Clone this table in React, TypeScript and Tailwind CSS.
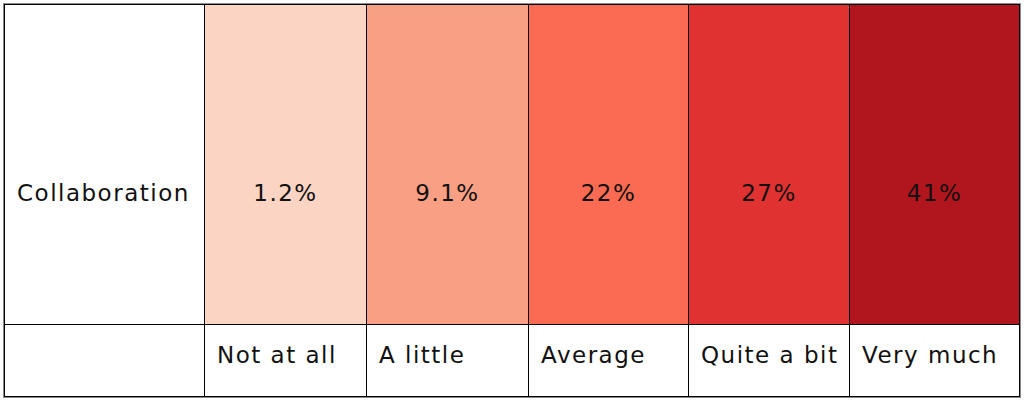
const cells = [
  { value: "1.2%", label: "Not at all", bg: "bg-[#fbd4c3]" },
  { value: "9.1%", label: "A little", bg: "bg-[#f9a084]" },
  { value: "22%", label: "Average", bg: "bg-[#fb6b53]" },
  { value: "27%", label: "Quite a bit", bg: "bg-[#e03331]" },
  { value: "41%", label: "Very much", bg: "bg-[#b1161f]" },
];

const App: React.FC = () => {
  return (
    <div
      className="w-[1024px] h-[401px] bg-white pt-[3px] pl-[3px]"
      style={{ fontFamily: "'DejaVu Sans', Inter, sans-serif" }}
    >
      <div className="w-[1018px] border border-[#8a8a8a]">
        <div className="grid grid-cols-[200px_162px_162px_160px_161px_1fr] grid-rows-[320px_72px] border-l border-t border-black text-[23px] tracking-[1.5px] text-[#111]">
          <div className="flex items-center pl-[12px] pt-[58px] border-r border-b border-black bg-white">
            Collaboration
          </div>
          {cells.map((c) => (
            <div
              key={c.value}
              className={`flex items-center justify-center pt-[58px] border-r border-b border-black ${c.bg}`}
            >
              {c.value}
            </div>
          ))}
          <div className="border-r border-b border-black bg-white" />
          {cells.map((c) => (
            <div
              key={c.label}
              className="flex items-center pl-[12px] pb-[10px] border-r border-b border-black bg-white"
            >
              {c.label}
            </div>
          ))}
        </div>
      </div>
    </div>
  );
};

export default App;
